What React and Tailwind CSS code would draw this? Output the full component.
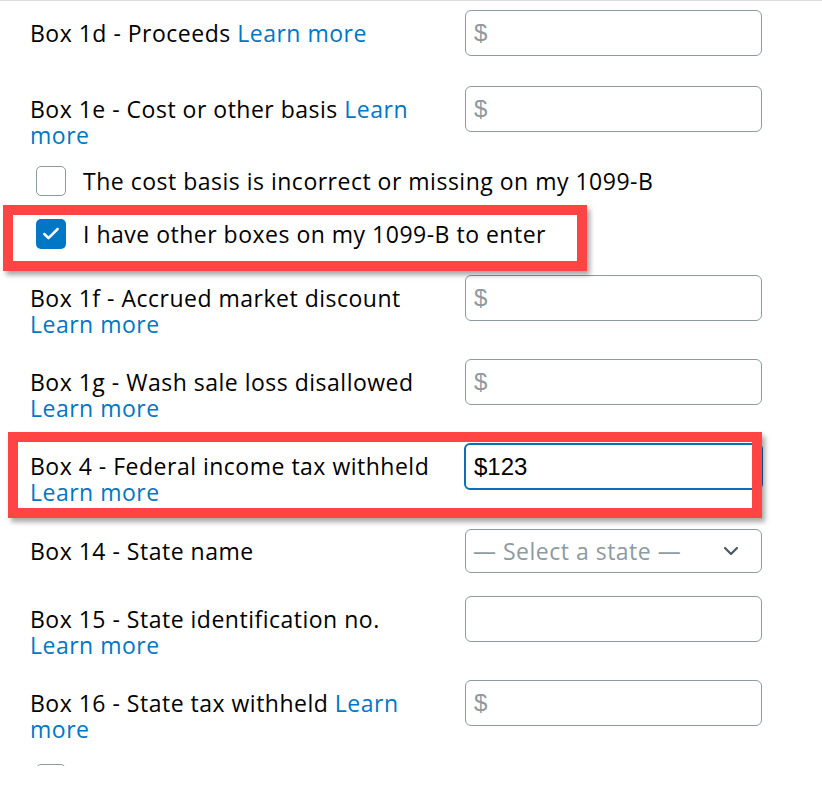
import { ChevronDown, Check } from 'lucide-react';

// --- Form rows ---
const LABEL_FONT = 'font-["Open_Sans","Noto_Sans",sans-serif] tracking-[0.5px]';

const LearnMore = () => (
  <a href="#" className="text-[#0077c5]">Learn more</a>
);

const MoneyInput = ({ value }) => (
  <div className="flex h-[46px] w-[297px] items-center rounded-[6px] border border-[#8d9aa0] bg-white pl-[8px] font-['Liberation_Sans',Arial,sans-serif] text-[24px] tracking-normal">
    {value ? <span className="text-black">{value}</span> : <span className="text-[#8d9aa0]">$</span>}
  </div>
);

const Row = ({ label, className, children, labelClass = 'pt-[10px]' }) => (
  <div className={`grid grid-cols-[435px_297px] items-start ${className}`}>
    <div className={`w-[420px] text-[23px] leading-[26px] text-black ${labelClass}`}>{label}</div>
    {children}
  </div>
);

const CheckRow = ({ checked, text, className }) => (
  <div className={`flex items-center gap-[17px] pl-[6px] ${className}`}>
    {checked ? (
      <span className="flex h-[30px] w-[30px] items-center justify-center rounded-[5px] bg-[#0077c5]">
        <Check size={20} strokeWidth={3} className="text-white" />
      </span>
    ) : (
      <span className="h-[30px] w-[30px] rounded-[5px] border border-[#8d9aa0] bg-white" />
    )}
    <span className="text-[23px] leading-[26px] text-black">{text}</span>
  </div>
);

export default function App() {
  return (
    <div className={`relative h-[766px] w-[822px] overflow-hidden border-t border-[#dcdcdc] bg-white pl-[30px] ${LABEL_FONT}`}>
      <Row className="mt-[9px]" label={<>Box 1d - Proceeds <LearnMore /></>}>
        <MoneyInput />
      </Row>

      <Row className="mt-[30px]" label={<>Box 1e - Cost or other basis <LearnMore /></>}>
        <MoneyInput />
      </Row>

      <CheckRow className="mt-[18px]" text="The cost basis is incorrect or missing on my 1099-B" />
      <CheckRow className="mt-[23px]" checked text="I have other boxes on my 1099-B to enter" />

      <Row className="mt-[26px]" label={<>Box 1f - Accrued market discount<br /><LearnMore /></>}>
        <MoneyInput />
      </Row>

      <Row className="mt-[22px]" label={<>Box 1g - Wash sale loss disallowed<br /><LearnMore /></>}>
        <MoneyInput />
      </Row>

      <Row className="mt-[22px]" label={<>Box 4 - Federal income tax withheld<br /><LearnMore /></>}>
        <div className="-ml-[1px] flex h-[47px] w-[299px] items-center rounded-[6px] border-2 border-[#0a6ebd] bg-white pl-[8px] font-['Liberation_Sans',Arial,sans-serif] text-[24px] tracking-normal text-black">
          $123
        </div>
      </Row>

      <Row className="mt-[24px]" labelClass="pt-[9px]" label="Box 14 - State name">
        <div className="flex h-[44px] w-[297px] items-center justify-between rounded-[6px] border border-[#8d9aa0] bg-white pl-[7px] pr-[18px] text-[23px] text-[#8d9aa0]">
          <span>— Select a state —</span>
          <ChevronDown size={24} strokeWidth={2.2} className="text-[#4a5a63]" />
        </div>
      </Row>

      <Row className="mt-[23px]" label={<>Box 15 - State identification no.<br /><LearnMore /></>}>
        <div className="h-[46px] w-[297px] rounded-[6px] border border-[#8d9aa0] bg-white" />
      </Row>

      <Row className="mt-[22px]" label={<>Box 16 - State tax withheld <LearnMore /></>}>
        <MoneyInput />
      </Row>

      <CheckRow className="mt-[22px]" text="" />

      {/* annotation frames */}
      <div className="pointer-events-none absolute left-[3px] top-[204px] h-[66px] w-[584px] border-[10px] border-[#ff4444] shadow-[3px_4px_5px_rgba(0,0,0,0.35)]" />
      <div className="pointer-events-none absolute left-[8px] top-[431px] h-[86px] w-[754px] border-[10px] border-[#ff4444] shadow-[3px_4px_5px_rgba(0,0,0,0.35)]" />
    </div>
  );
}
